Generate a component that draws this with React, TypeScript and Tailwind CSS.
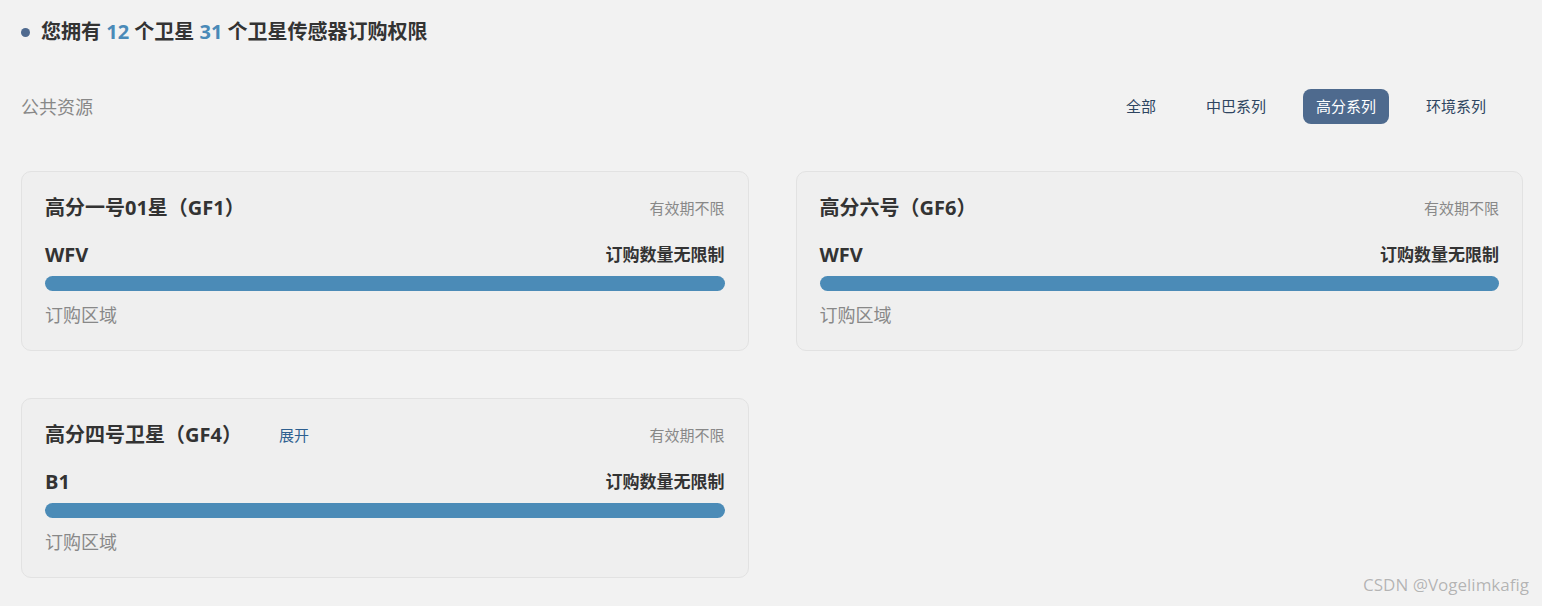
import React from 'react';

const cards = [
  { title: '高分一号01星（GF1）', sensor: 'WFV', expand: false },
  { title: '高分六号（GF6）', sensor: 'WFV', expand: false },
  { title: '高分四号卫星（GF4）', sensor: 'B1', expand: true },
];

const tabs = ['全部', '中巴系列', '高分系列', '环境系列'];

const App = () => {
  return (
    <div
      className="relative min-h-[606px] w-full bg-[#f2f2f2] pl-[21px] pr-[19px] text-[#333]"
      style={{ fontFamily: '"Open Sans", "Noto Sans CJK SC", sans-serif' }}
    >
      <div className="flex h-[64px] items-center gap-[11px]">
        <span className="h-[9px] w-[9px] rounded-full bg-[#4f6a8f]"></span>
        <h1 className="text-[20px] font-bold leading-[28px] text-[#333]">
          您拥有 <span className="text-[#4a8ab8]">12</span> 个卫星{' '}
          <span className="text-[#4a8ab8]">31</span> 个卫星传感器订购权限
        </h1>
      </div>

      <div className="mt-[25px] flex items-center justify-between">
        <span className="text-[18px] leading-[26px] text-[#888]">公共资源</span>
        <div className="mr-[24px] flex items-center gap-[24px]">
          {tabs.map((t) => (
            <button
              key={t}
              className={
                t === '高分系列'
                  ? 'h-[35px] rounded-[8px] bg-[#4e6a8e] px-[13px] text-[15px] text-white'
                  : 'h-[35px] rounded-[8px] px-[13px] text-[15px] text-[#2e4561]'
              }
            >
              {t}
            </button>
          ))}
        </div>
      </div>

      <div className="mt-[47px] grid grid-cols-2 gap-x-[47px] gap-y-[47px]">
        {cards.map((c) => (
          <div
            key={c.title}
            className="rounded-[10px] border border-[#e2e2e2] bg-[#efefef] px-[23px] pb-[23px] pt-[23px]"
          >
            <div className="flex h-[26px] items-center justify-between">
              <div className="flex items-center">
                <span className="text-[20px] font-bold leading-[26px] text-[#333]">{c.title}</span>
                {c.expand && (
                  <span className="ml-[37px] text-[15px] text-[#2e5f8f]">展开</span>
                )}
              </div>
              <span className="text-[15px] text-[#888]">有效期不限</span>
            </div>
            <div className="mt-[21px] flex h-[26px] items-center justify-between">
              <span className="text-[20px] font-bold text-[#333]">{c.sensor}</span>
              <span className="text-[17px] font-bold text-[#333]">订购数量无限制</span>
            </div>
            <div className="mt-[8px] h-[15px] w-full rounded-full bg-[#4b8bb7]"></div>
            <div className="mt-[12px] text-[18px] leading-[24px] text-[#888]">订购区域</div>
          </div>
        ))}
      </div>

      <span className="absolute bottom-[9px] right-[13px] text-[17px] text-[#b4b4b4] [text-shadow:0_0_1px_#fff]">
        CSDN @Vogelimkafig
      </span>
    </div>
  );
};

export default App;
